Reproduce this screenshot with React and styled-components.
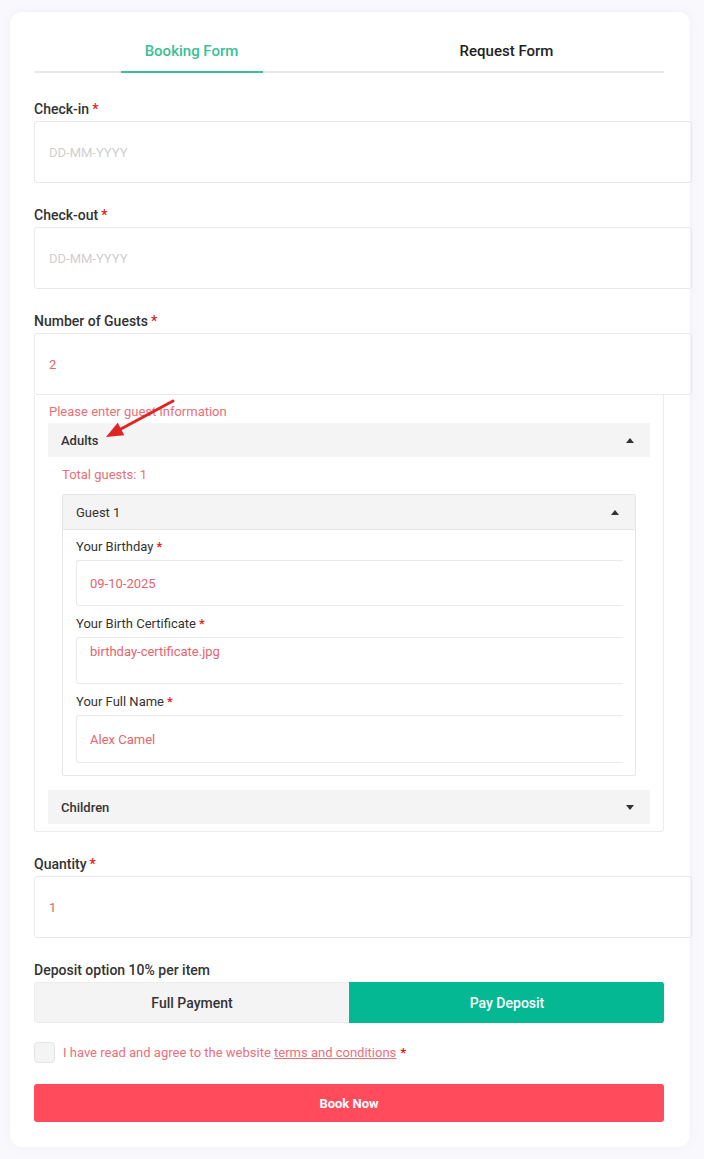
import React, { useState } from "react";
import styled, { createGlobalStyle } from "styled-components";

const GlobalStyle = createGlobalStyle`
  body {
    margin: 0;
    background: #f9f9fd;
    font-family: Roboto, "Liberation Sans", sans-serif;
  }
`;

const Page = styled.div`
  padding: 12px 14px 12px 10px;
`;

const Card = styled.div`
  width: 680px;
  box-sizing: border-box;
  background: #fff;
  border-radius: 12px;
  box-shadow: 0 0 12px rgba(40, 50, 120, 0.05);
  padding: 0 26px 25px 24px;
`;

const Tabs = styled.div`
  display: grid;
  grid-template-columns: 1fr 1fr;
  border-bottom: 2px solid #e8e8e8;
`;

const Tab = styled.div`
  display: flex;
  justify-content: center;
  span {
    display: block;
    width: 142px;
    text-align: center;
    padding: 29px 0 10px;
    line-height: 20px;
    font-size: 15px;
    font-weight: 500;
    color: ${(p) => (p.$active ? "#3bbf95" : "#222")};
    border-bottom: 2px solid ${(p) => (p.$active ? "#3bbf95" : "transparent")};
    margin-bottom: -2px;
  }
`;

const Field = styled.div`
  margin-top: ${(p) => p.$top ?? 22}px;
`;

const Label = styled.div`
  font-size: ${(p) => (p.$small ? 13 : 14)}px;
  font-weight: ${(p) => (p.$small ? 400 : 500)};
  color: #333;
  line-height: ${(p) => (p.$small ? 18 : 20)}px;
  margin-bottom: ${(p) => (p.$small ? 4 : 2)}px;
  b {
    color: #e02020;
    margin-left: 3px;
    font-weight: 500;
  }
`;

const Input = styled.div`
  box-sizing: border-box;
  width: calc(100% + 28px);
  height: 62px;
  border: 1px solid #e9e9e9;
  border-radius: 3px;
  padding: 0 14px;
  display: flex;
  align-items: center;
  font-size: 13px;
  color: ${(p) => (p.$placeholder ? "#cfcfcf" : "#e5646e")};
`;

const SubInput = styled.div`
  box-sizing: border-box;
  width: calc(100% + 1px);
  height: ${(p) => p.$h || 46}px;
  border: 1px solid #eaeaea;
  border-right: none;
  border-radius: 3px 0 0 3px;
  padding: ${(p) => (p.$top ? "6px 13px 0" : "0 13px")};
  display: flex;
  align-items: ${(p) => (p.$top ? "flex-start" : "center")};
  font-size: 13px;
  color: #e5646e;
`;

const GuestBox = styled.div`
  position: relative;
  border: 1px solid #ebebeb;
  border-top: none;
  border-radius: 0 0 3px 3px;
  padding: 8px 13px 7px 13px;
`;

const ErrorText = styled.div`
  font-size: 13px;
  line-height: 18px;
  color: #e8707a;
  padding-left: 1px;
  margin-bottom: 2px;
`;

const AccHeader = styled.div`
  box-sizing: border-box;
  display: flex;
  align-items: center;
  justify-content: space-between;
  height: ${(p) => p.$h || 34}px;
  padding: 0 16px 0 13px;
  background: #f4f4f4;
  font-size: 13px;
  font-weight: ${(p) => (p.$light ? 400 : 500)};
  color: #333;
  border-bottom: ${(p) => (p.$line ? "1px solid #e6e6e6" : "none")};
`;

const Caret = styled.span`
  width: 0;
  height: 0;
  border-left: 4px solid transparent;
  border-right: 4px solid transparent;
  ${(p) => (p.$down ? "border-top: 5px solid #333;" : "border-bottom: 5px solid #333;")}
`;

const AccBody = styled.div`
  padding: 9px 14px 14px 14px;
`;

const Total = styled.div`
  font-size: 13px;
  line-height: 18px;
  color: #e8707a;
  margin-bottom: 10px;
`;

const GuestCard = styled.div`
  border: 1px solid #e6e6e6;
  border-radius: 2px;
`;

const GuestBody = styled.div`
  padding: 8px 13px 12px 13px;
`;

const SubField = styled.div`
  margin-top: ${(p) => p.$top ?? 9}px;
`;

const Toggle = styled.div`
  display: grid;
  grid-template-columns: 315px 1fr;
  height: 41px;
  border-radius: 3px;
  overflow: hidden;
`;

const ToggleBtn = styled.div`
  display: flex;
  align-items: center;
  justify-content: center;
  font-size: 14px;
  font-weight: 500;
  background: ${(p) => (p.$on ? "#03b893" : "#f4f4f4")};
  color: ${(p) => (p.$on ? "#fff" : "#333")};
  border: 1px solid ${(p) => (p.$on ? "#03b893" : "#ececec")};
  border-right: none;
`;

const Agree = styled.label`
  display: flex;
  align-items: center;
  gap: 8px;
  margin-top: 19px;
  font-size: 13px;
  color: #e8707a;
  a {
    color: #e8707a;
    text-decoration: underline;
  }
  b {
    color: #e02020;
    margin-left: 4px;
  }
`;

const Box = styled.span`
  width: 21px;
  height: 21px;
  box-sizing: border-box;
  border: 1px solid #e4e4e4;
  background: #f4f4f4;
  border-radius: 4px;
`;

const BookBtn = styled.button`
  display: block;
  width: 100%;
  height: 38px;
  margin-top: 21px;
  border: none;
  border-radius: 3px;
  background: #ff4b5c;
  color: #fff;
  font-family: inherit;
  font-size: 13px;
  font-weight: 700;
`;

const Arrow = styled.svg`
  position: absolute;
  left: 60px;
  top: 0;
`;

export default function App() {
  const [deposit, setDeposit] = useState(true);

  return (
    <Page>
      <GlobalStyle />
      <Card>
        <Tabs>
          <Tab $active>
            <span>Booking Form</span>
          </Tab>
          <Tab>
            <span>Request Form</span>
          </Tab>
        </Tabs>

        <Field $top={26}>
          <Label>
            Check-in<b>*</b>
          </Label>
          <Input $placeholder>DD-MM-YYYY</Input>
        </Field>

        <Field>
          <Label>
            Check-out<b>*</b>
          </Label>
          <Input $placeholder>DD-MM-YYYY</Input>
        </Field>

        <Field>
          <Label>
            Number of Guests<b>*</b>
          </Label>
          <Input>2</Input>
          <GuestBox>
            <Arrow width="90" height="50" viewBox="0 0 90 50">
              <line x1="78" y1="6" x2="24" y2="35" stroke="#e02424" strokeWidth="3" strokeLinecap="round" />
              <polygon points="11,42 22.7,27.8 29.3,40.2" fill="#e02424" />
            </Arrow>
            <ErrorText>Please enter guest information</ErrorText>
            <AccHeader>
              Adults
              <Caret />
            </AccHeader>
            <AccBody>
              <Total>Total guests: 1</Total>
              <GuestCard>
                <AccHeader $h={35} $light $line>
                  Guest 1
                  <Caret />
                </AccHeader>
                <GuestBody>
                  <SubField $top={0}>
                    <Label $small>
                      Your Birthday<b>*</b>
                    </Label>
                    <SubInput>09-10-2025</SubInput>
                  </SubField>
                  <SubField>
                    <Label $small>
                      Your Birth Certificate<b>*</b>
                    </Label>
                    <SubInput $h={47} $top>
                      birthday-certificate.jpg
                    </SubInput>
                  </SubField>
                  <SubField>
                    <Label $small>
                      Your Full Name<b>*</b>
                    </Label>
                    <SubInput $h={48}>Alex Camel</SubInput>
                  </SubField>
                </GuestBody>
              </GuestCard>
            </AccBody>
            <AccHeader>
              Children
              <Caret $down />
            </AccHeader>
          </GuestBox>
        </Field>

        <Field>
          <Label>
            Quantity<b>*</b>
          </Label>
          <Input>1</Input>
        </Field>

        <Field>
          <Label>Deposit option 10% per item</Label>
          <Toggle>
            <ToggleBtn $on={!deposit} onClick={() => setDeposit(false)}>
              Full Payment
            </ToggleBtn>
            <ToggleBtn $on={deposit} onClick={() => setDeposit(true)}>
              Pay Deposit
            </ToggleBtn>
          </Toggle>
        </Field>

        <Agree>
          <Box />
          <span>
            I have read and agree to the website <a href="#">terms and conditions</a>
            <b>*</b>
          </span>
        </Agree>

        <BookBtn>Book Now</BookBtn>
      </Card>
    </Page>
  );
}
